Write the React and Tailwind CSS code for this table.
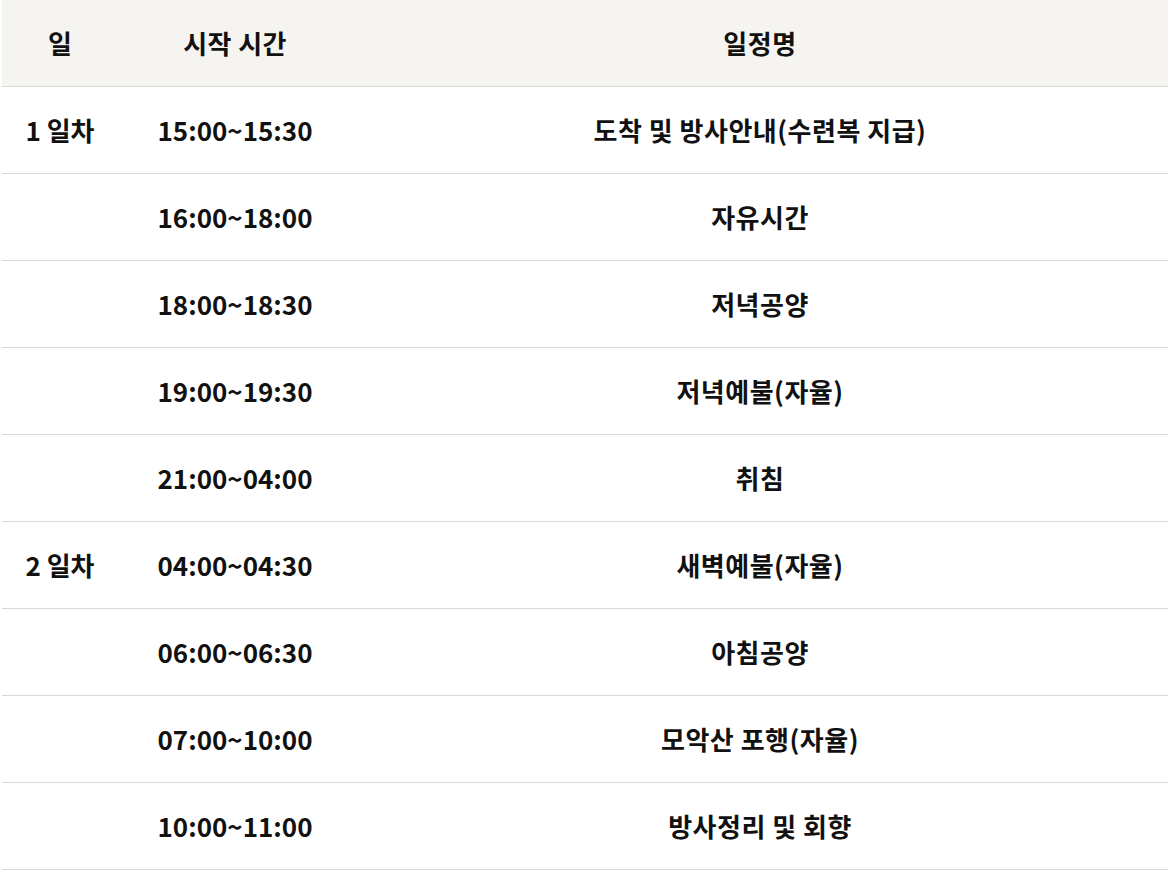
const rows = [
  ["1 일차", "15:00~15:30", "도착 및 방사안내(수련복 지급)"],
  ["", "16:00~18:00", "자유시간"],
  ["", "18:00~18:30", "저녁공양"],
  ["", "19:00~19:30", "저녁예불(자율)"],
  ["", "21:00~04:00", "취침"],
  ["2 일차", "04:00~04:30", "새벽예불(자율)"],
  ["", "06:00~06:30", "아침공양"],
  ["", "07:00~10:00", "모악산 포행(자율)"],
  ["", "10:00~11:00", "방사정리 및 회향"],
];

export default function App() {
  return (
    <div className="w-[1170px] h-[870px] bg-white pl-[2px] pr-[2px]" style={{ fontFamily: '"Noto Sans CJK KR", "Noto Sans", sans-serif' }}>
      <table className="w-[1166px] border-collapse table-fixed text-[#111] font-bold text-[26px]">
        <colgroup>
          <col className="w-[116px]" />
          <col className="w-[234px]" />
          <col />
        </colgroup>
        <thead>
          <tr className="bg-[#f6f4f0] h-[86px] border-b border-[#d9d9d9]">
            <th className="text-center font-bold">일</th>
            <th className="text-center font-bold tracking-[0.4px]">시작 시간</th>
            <th className="text-center font-bold tracking-[0.5px]">일정명</th>
          </tr>
        </thead>
        <tbody>
          {rows.map((r, i) => (
            <tr key={i} className="h-[87px] border-b border-[#d9d9d9]">
              <td className="text-center">{r[0]}</td>
              <td className="text-center">{r[1]}</td>
              <td className="text-center tracking-[0.5px]">{r[2]}</td>
            </tr>
          ))}
        </tbody>
      </table>
    </div>
  );
}
